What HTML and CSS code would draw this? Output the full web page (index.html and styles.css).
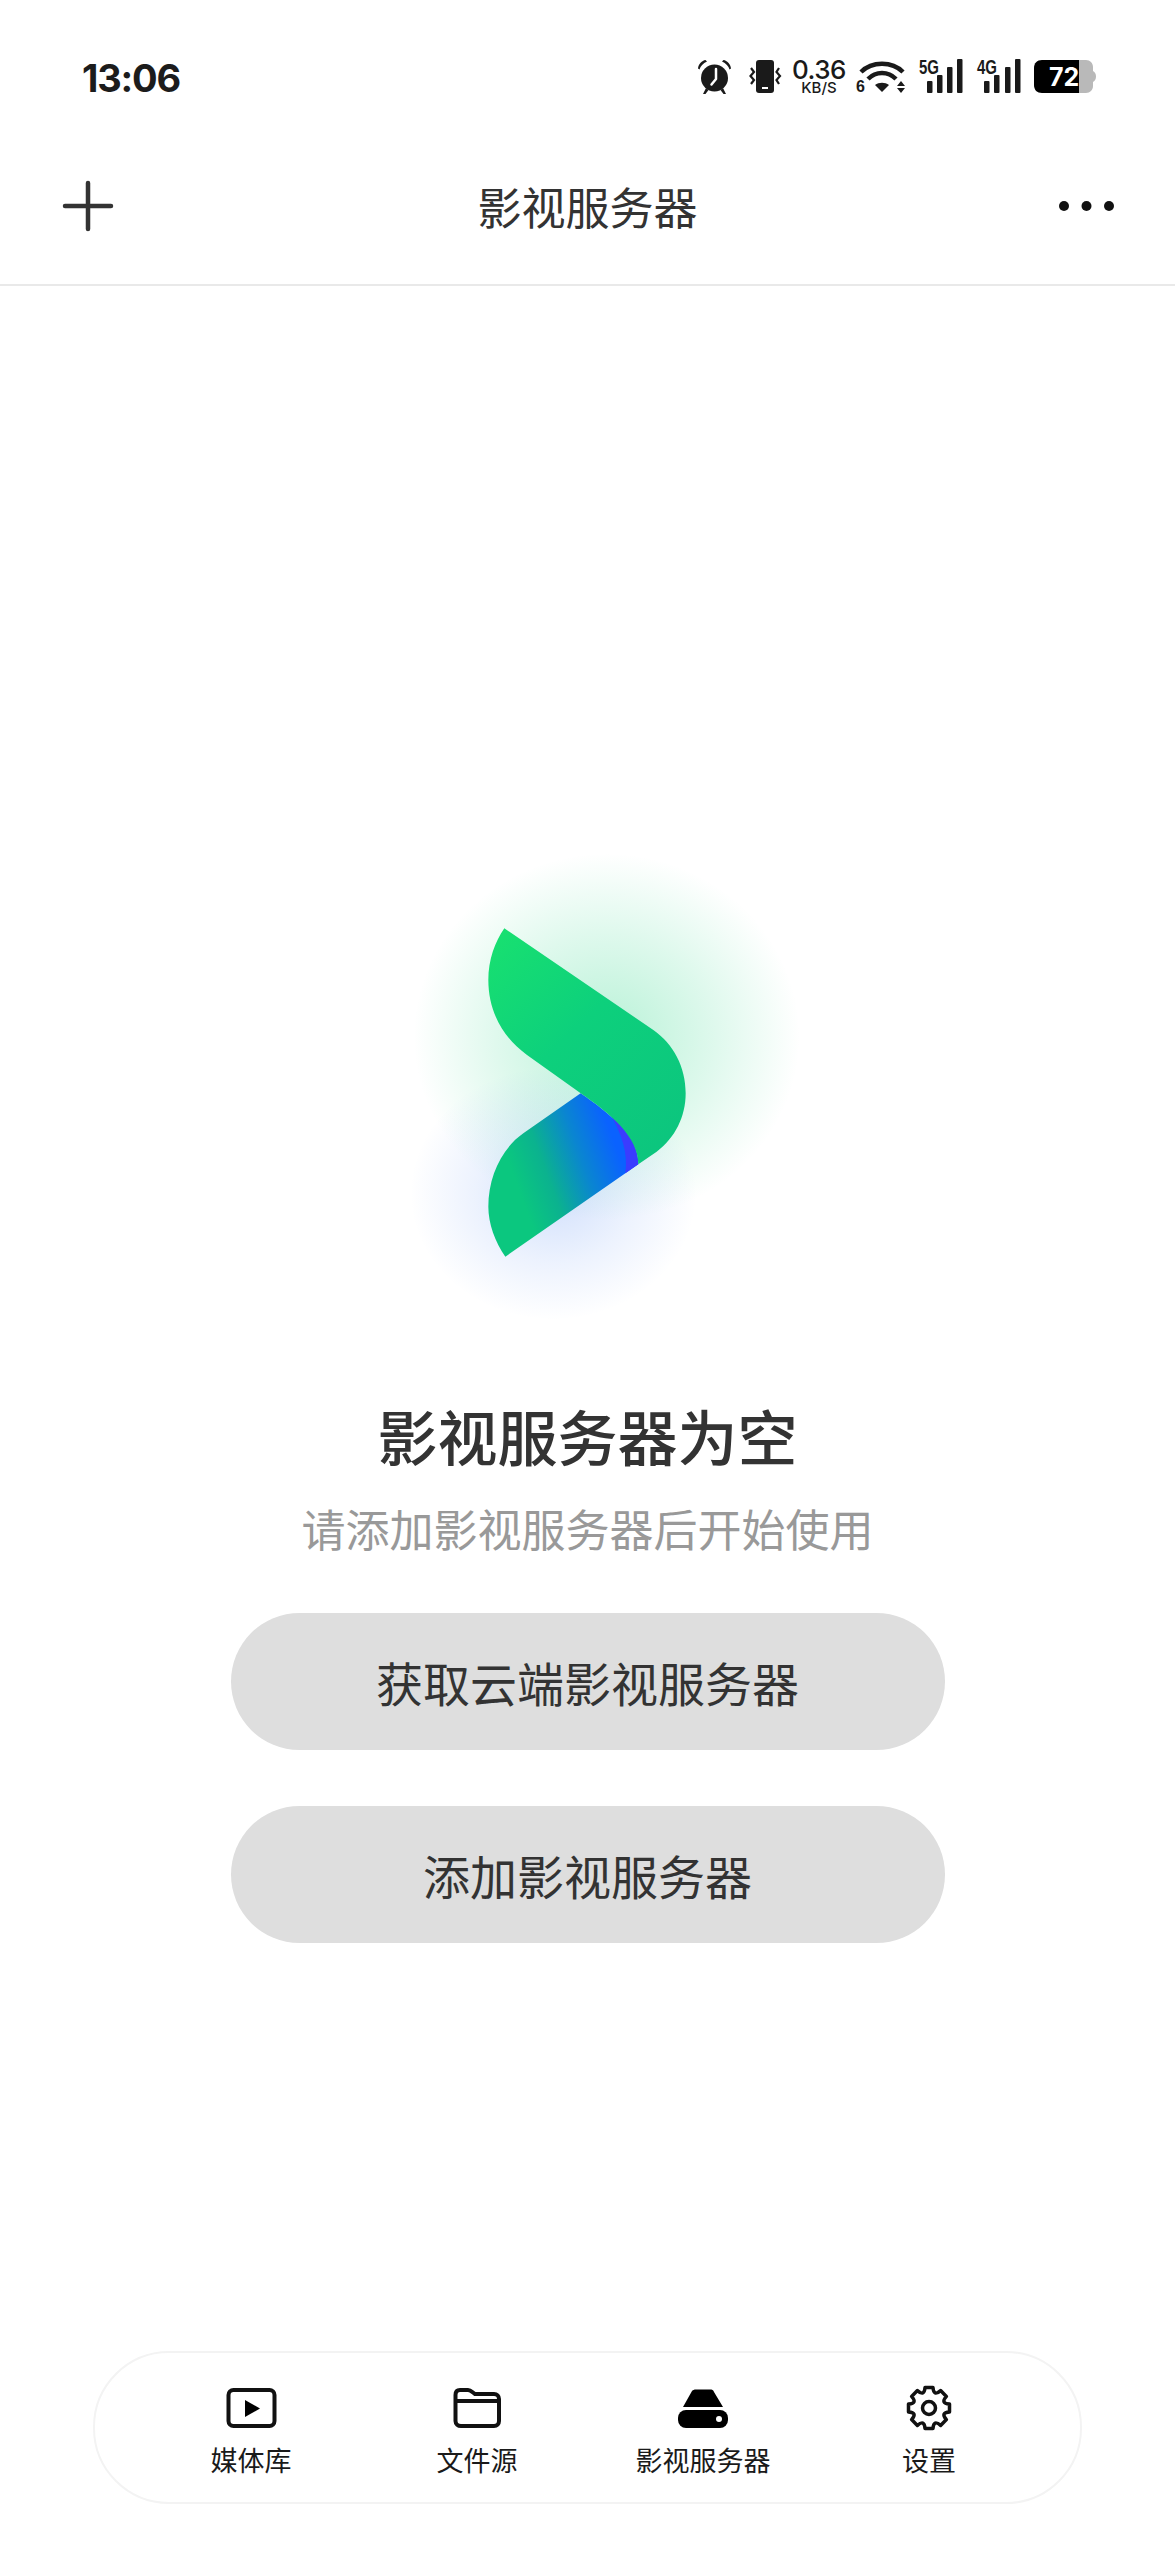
FILE: index.html
```html
<!DOCTYPE html>
<html lang="zh-CN">
<head>
<meta charset="utf-8">
<title>影视服务器</title>
<link rel="stylesheet" href="styles.css">
</head>
<body>
<div class="page">
  <div class="statusbar">
    <span class="time">13:06</span>
    <div class="status-icons">
      <svg class="ic-alarm" viewBox="0 0 35 35" width="35" height="35">
        <circle class="ink" cx="17.5" cy="19" r="13.5"/>
        <path class="ink" d="M1 9.5 C1.500 5 5 1.500 8.500 1 L10 2.500 C6 4.500 3.500 7 2.500 10.500Z M34 9.500 C33.500 5 30 1.500 26.500 1 L25 2.500 C29 4.500 31.500 7 32.500 10.500Z M6 35 L9 29 L11.500 31 L8.500 35Z M29 35 L26 29 L23.500 31 L26.500 35Z"/>
        <path class="hand" d="M19 10 V20 L14.500 25.500"/>
      </svg>
      <svg class="ic-vibrate" viewBox="0 0 33 34" width="33" height="34">
        <rect class="ink" x="7" y="1" width="18" height="33" rx="3"/>
        <rect class="white" x="13" y="28" width="6" height="2"/>
        <path class="squiggle" d="M2 9 L5 13 L1.500 17 L5 21 L2 25 M30 9 L27.500 13 L31 17 L27.500 21 L30 25"/>
      </svg>
      <div class="speed"><span class="speed-num">0.36</span><span class="speed-unit">KB/S</span></div>
      <svg class="ic-wifi" viewBox="0 0 48 34" width="48" height="34">
        <path class="arc" d="M3 13 C14 2 34 2 45 13"/>
        <path class="arc" d="M10 20 C18 12 30 12 38 20"/>
        <path class="ink" d="M24 33 L17 26 C21 23 27 23 31 26Z"/>
        <path class="ink" d="M43 22 L47 27 H39Z M43 34 L39 29 H47Z"/>
        <text class="wifi-six" x="-2" y="33">6</text>
      </svg>
      <svg class="ic-signal" viewBox="0 0 44 34" width="44" height="34">
        <text class="net" x="0" y="15" textLength="20" lengthAdjust="spacingAndGlyphs">5G</text>
        <rect class="ink" x="8" y="22" width="5.500" height="12" rx="1"/>
        <rect class="ink" x="18" y="16" width="5.500" height="18" rx="1"/>
        <rect class="ink" x="28" y="8" width="5.500" height="26" rx="1"/>
        <rect class="ink" x="38" y="0" width="5.500" height="34" rx="1"/>
      </svg>
      <svg class="ic-signal ic-signal-4g" viewBox="0 0 44 34" width="44" height="34">
        <text class="net" x="0" y="15" textLength="20" lengthAdjust="spacingAndGlyphs">4G</text>
        <rect class="ink" x="7" y="22" width="5.500" height="12" rx="1"/>
        <rect class="ink" x="17" y="16" width="5.500" height="18" rx="1"/>
        <rect class="ink" x="28" y="8" width="5.500" height="26" rx="1"/>
        <rect class="ink" x="38" y="0" width="5.500" height="34" rx="1"/>
      </svg>
      <svg class="ic-battery" viewBox="0 0 62 33" width="62" height="33">
        <path class="batt-rest" d="M40 0 H52 C56 0 59 3 59 7 V11 C61 12 62 14 62 16.500 C62 19 61 21 59 22 V26 C59 30 56 33 52 33 H40Z"/>
        <path class="ink-black" d="M8 0 H45 V33 H8 C3 33 0 30 0 25 V8 C0 3 3 0 8 0Z"/>
        <text class="batt-num" x="15" y="26">72</text>
      </svg>
    </div>
  </div>

  <header class="appbar">
    <svg class="plus" viewBox="0 0 48 48" width="48" height="48"><path d="M24 1 V47 M1 24 H47"/></svg>
    <h1 class="appbar-title">影视服务器</h1>
    <svg class="more" viewBox="0 0 55 10" width="55" height="10"><circle cx="5" cy="5" r="5"/><circle cx="27.500" cy="5" r="5"/><circle cx="50" cy="5" r="5"/></svg>
  </header>

  <main class="empty">
    <svg class="logo" viewBox="0 0 1320 1440" width="440" height="480">
      <defs>
        <radialGradient id="glowGreen"><stop offset="0" stop-color="#13d27a" stop-opacity=".30"/><stop offset=".55" stop-color="#13d27a" stop-opacity=".14"/><stop offset="1" stop-color="#13d27a" stop-opacity="0"/></radialGradient>
        <radialGradient id="glowBlue"><stop offset="0" stop-color="#1a62f0" stop-opacity=".20"/><stop offset=".55" stop-color="#1a62f0" stop-opacity=".08"/><stop offset="1" stop-color="#1a62f0" stop-opacity="0"/></radialGradient>
        <linearGradient id="leafTop" x1="0.05" y1="0" x2="0.85" y2="1"><stop offset="0" stop-color="#18e070"/><stop offset=".45" stop-color="#0dd07c"/><stop offset="1" stop-color="#0cc57e"/></linearGradient>
        <linearGradient id="leafLow" gradientUnits="userSpaceOnUse" x1="420" y1="1060" x2="720" y2="950"><stop offset="0" stop-color="#0bc77f"/><stop offset=".3" stop-color="#0bb28f"/><stop offset=".65" stop-color="#0a86d0"/><stop offset="1" stop-color="#0a62ff"/></linearGradient>
      </defs>
      <ellipse cx="680" cy="590" rx="580" ry="550" fill="url(#glowGreen)"/>
      <ellipse cx="520" cy="1060" rx="430" ry="380" fill="url(#glowBlue)"/>
      <path fill="url(#leafLow)" d="M376 1250 C345 1205 325 1150 325 1100 C325 1010 365 925 430 880 L602 760 C690 820 775 890 775 973Z"/>
      <path fill="#3a3cff" d="M690 822 C740 860 775 915 775 973 L736 1000 C745 940 725 880 690 822Z"/>
      <path fill="url(#leafTop)" d="M373 265 L820 570 C880 612 917 680 917 760 C917 830 885 895 830 935 L775 973 C775 890 690 820 602 760 L440 644 C365 590 325 510 325 420 C325 360 345 305 373 265Z"/>
    </svg>
    <h2 class="empty-title">影视服务器为空</h2>
    <p class="empty-sub">请添加影视服务器后开始使用</p>
    <div class="actions">
      <button class="pill" type="button">获取云端影视服务器</button>
      <button class="pill" type="button">添加影视服务器</button>
    </div>
  </main>

  <nav class="tabbar">
    <div class="tab">
      <svg class="tab-icon" viewBox="0 0 50 44" width="50" height="44"><rect class="line" x="2.500" y="4" width="46" height="36" rx="5"/><path class="solid" d="M19 14 L34 22.500 L19 31Z"/></svg>
      <span class="tab-label">媒体库</span>
    </div>
    <div class="tab">
      <svg class="tab-icon" viewBox="0 0 50 44" width="50" height="44"><path class="line" d="M3.500 9 C3.500 6 5 4 8 4 H16 C19 4 20 6 23 8 H42 C45 8 47 10 47 13 V35 C47 38 45 40 42 40 H9 C6 40 3.500 38 3.500 35Z M3.500 15 H47"/></svg>
      <span class="tab-label">文件源</span>
    </div>
    <div class="tab">
      <svg class="tab-icon" viewBox="0 0 50 44" width="50" height="44"><path class="solid" d="M14 5 C15 4 16 3.500 18 3.500 H32 C34 3.500 35.500 4 36 6 L45 21 H5 Z"/><rect class="solid" x="0" y="24" width="50" height="18" rx="8"/><circle class="white" cx="41" cy="33" r="3"/></svg>
      <span class="tab-label">影视服务器</span>
    </div>
    <div class="tab">
      <svg class="tab-icon" viewBox="-25 -22 50 44" width="50" height="44"><path class="line line-gear" d="M-4-20.500 L4-20.500 Q4.600-11.100 11.600-17.400 L17.400-11.600 Q11.100-4.600 20.500-4 L20.500 4 Q11.100 4.600 17.400 11.600 L11.600 17.400 Q4.600 11.100 4 20.500 L-4 20.500 Q-4.600 11.100 -11.600 17.400 L-17.400 11.600 Q-11.100 4.600 -20.500 4 L-20.500 -4 Q-11.100 -4.600 -17.400 -11.600 L-11.600 -17.400 Q-4.600 -11.100 -4 -20.500Z"/><circle class="line line-gear" cx="0" cy="0" r="6.500"/></svg>
      <span class="tab-label">设置</span>
    </div>
  </nav>
</div>
</body>
</html>
```

FILE: styles.css
```css
* { box-sizing: border-box; }
html, body { margin: 0; padding: 0; background: #fff; }
body { font-family: "Noto Sans CJK SC", "Noto Sans", sans-serif; color: #333; }

.page { width: 1175px; height: 2560px; display: flex; flex-direction: column; overflow: hidden; }

/* status bar */
.statusbar { height: 114px; flex: none; padding: 59px 79px 0 82px; display: flex; justify-content: space-between; align-items: flex-start; }
.time { font-family: Inter, "Liberation Sans", sans-serif; font-weight: 700; font-size: 38px; line-height: 38px; color: #1c1c1c; letter-spacing: -1.2px; }
.status-icons { display: flex; align-items: flex-start; }
.status-icons svg { display: block; flex: none; overflow: visible; }
.ink { fill: #1a1a1a; }
.ink-black { fill: #000; }
.white { fill: #fff; }
.hand { fill: none; stroke: #fff; stroke-width: 2.500; stroke-linecap: round; stroke-linejoin: round; }
.squiggle { fill: none; stroke: #1a1a1a; stroke-width: 2.200; }
.arc { fill: none; stroke: #1a1a1a; stroke-width: 4.500; }
.ic-vibrate { margin-left: 17px; }
.speed { margin-left: 10px; width: 54px; display: flex; flex-direction: column; align-items: center; font-family: Inter, "Liberation Sans", sans-serif; color: #1a1a1a; }
.speed-num { font-size: 26px; line-height: 22px; font-weight: 500; letter-spacing: -0.5px; }
.speed-unit { font-size: 15px; line-height: 14px; font-weight: 500; }
.ic-wifi { margin-left: 12px; }
.wifi-six { font-family: "Liberation Sans", sans-serif; font-weight: 700; font-size: 16px; fill: #1a1a1a; }
.ic-signal { margin-left: 13px; }
.ic-signal-4g { margin-left: 14px; }
.net { font-family: "Liberation Sans", sans-serif; font-weight: 700; font-size: 20px; fill: #1a1a1a; }
.ic-battery { margin-left: 13px; margin-top: 1px; }
.batt-rest { fill: #b9b9b9; }
.batt-num { font-family: Inter, "Liberation Sans", sans-serif; font-weight: 700; font-size: 25px; fill: #fff; }

/* app bar */
.appbar { height: 172px; flex: none; padding: 14px 61px 0 64px; display: flex; align-items: center; justify-content: space-between; border-bottom: 2px solid #e9e9e9; position: relative; }
.plus { display: block; overflow: visible; }
.plus path { fill: none; stroke: #333; stroke-width: 4.500; stroke-linecap: round; }
.more { display: block; }
.more circle { fill: #111; }
.appbar-title { margin: 0; font-size: 44px; line-height: 60px; font-weight: 400; color: #333; position: absolute; left: 0; right: 0; text-align: center; }

/* empty state */
.empty { flex: 1; display: flex; flex-direction: column; align-items: center; }
.logo { display: block; margin: 554px 0 0 25px; flex: none; }
.empty-title { margin: 75px 0 0; font-size: 60px; line-height: 80px; font-weight: 500; color: #333; }
.empty-sub { margin: 23px 0 0; font-size: 44px; line-height: 60px; font-weight: 400; color: #999; }
.actions { margin-top: 55px; display: flex; flex-direction: column; gap: 56px; }
.pill { width: 714px; height: 137px; border: 0; padding: 0; border-radius: 69px; background: #dedede; color: #333; font-family: inherit; font-size: 47px; font-weight: 400; }

/* tab bar */
.tabbar { flex: none; height: 153px; margin: 0 93px 56px; padding: 0 43px; display: grid; grid-template-columns: repeat(4, 226px); background: #fff; border: 2px solid #f3f3f3; border-radius: 76px; }
.tab { display: flex; flex-direction: column; align-items: center; padding-top: 33px; }
.tab-icon { display: block; overflow: visible; }
.tab-label { margin-top: 13px; font-size: 27px; line-height: 34px; color: #1a1a1a; }
.line { fill: none; stroke: #111; stroke-width: 4; stroke-linejoin: round; }
.line-gear { stroke-width: 3.500; }
.solid { fill: #000; }
```
